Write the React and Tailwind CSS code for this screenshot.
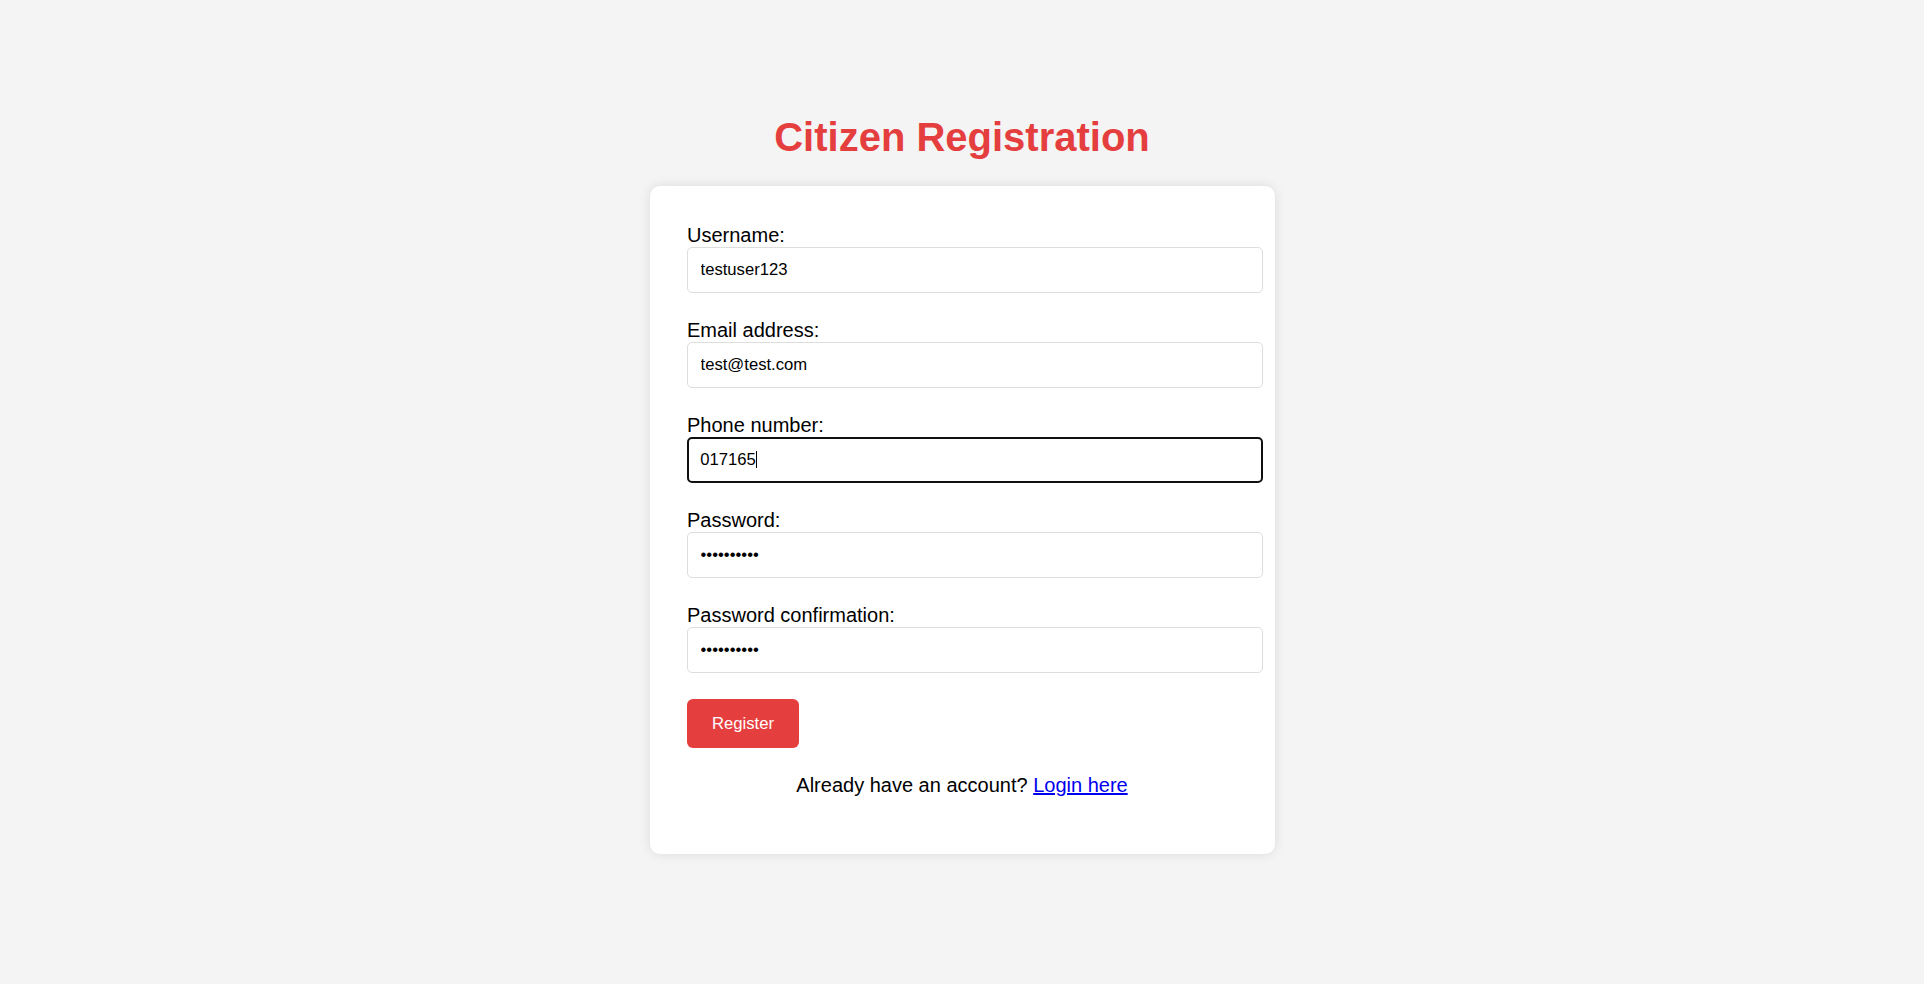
import React, { useState } from "react";

const fields = [
  { id: "username", label: "Username:", type: "text", value: "testuser123" },
  { id: "email", label: "Email address:", type: "email", value: "test@test.com" },
  { id: "phone", label: "Phone number:", type: "tel", value: "017165", focused: true },
  { id: "password", label: "Password:", type: "password", value: "password12" },
  { id: "password2", label: "Password confirmation:", type: "password", value: "password12" },
];

const Field = ({ field, value, onChange }) => {
  // focused field gets the dark ring like the browser's focus outline
  const inputClass = field.focused
    ? "block w-[576px] h-[46px] box-border rounded-[5px] border-[2.5px] border-[#101010] px-[11.25px] text-[16.67px] text-black bg-white outline-none caret-transparent"
    : "block w-[576px] h-[46px] box-border rounded-[5px] border-[1.25px] border-[#dddddd] px-[12.5px] text-[16.67px] text-black bg-white outline-none";

  return (
    <div className="mb-[25.6px]">
      <label htmlFor={field.id} className="block text-[20px] leading-[23.5px] text-black">
        {field.label}
      </label>
      <div className="relative">
        <input
          id={field.id}
          type={field.type}
          value={value}
          onChange={(e) => onChange(field.id, e.target.value)}
          className={inputClass}
        />
        {/* text caret, drawn so it shows in a still picture */}
        {field.focused && (
          <span className="absolute left-[69px] top-[14px] h-[17px] w-[1.25px] bg-black pointer-events-none" />
        )}
      </div>
    </div>
  );
};

const App = () => {
  const [values, setValues] = useState(
    Object.fromEntries(fields.map((f) => [f.id, f.value]))
  );

  const handleChange = (id, v) => {
    setValues((prev) => ({ ...prev, [id]: v }));
  };

  return (
    <div className="min-h-screen bg-[#f4f4f4] font-['Liberation_Sans',Arial,sans-serif] pt-[114px] flex flex-col items-center">
      <h1 className="text-[40px] leading-[46px] font-bold text-[#e53e3e] mb-[26px]">
        Citizen Registration
      </h1>
      <form
        onSubmit={(e) => e.preventDefault()}
        className="w-[625px] bg-white rounded-[10px] shadow-[0_0_12px_rgba(0,0,0,0.1)] pt-[37.5px] px-[37.5px] pb-[57px]"
      >
        {fields.map((field) => (
          <Field key={field.id} field={field} value={values[field.id]} onChange={handleChange} />
        ))}
        <button
          type="submit"
          className="block h-[49.5px] px-[25px] rounded-[6px] bg-[#e53e3e] text-white text-[16.67px] cursor-pointer"
        >
          Register
        </button>
        <p className="mt-[25.5px] text-center text-[20px] leading-[23px] text-black">
          Already have an account?{" "}
          <a href="#" className="text-[#0000ee] underline">
            Login here
          </a>
        </p>
      </form>
    </div>
  );
};

export default App;
